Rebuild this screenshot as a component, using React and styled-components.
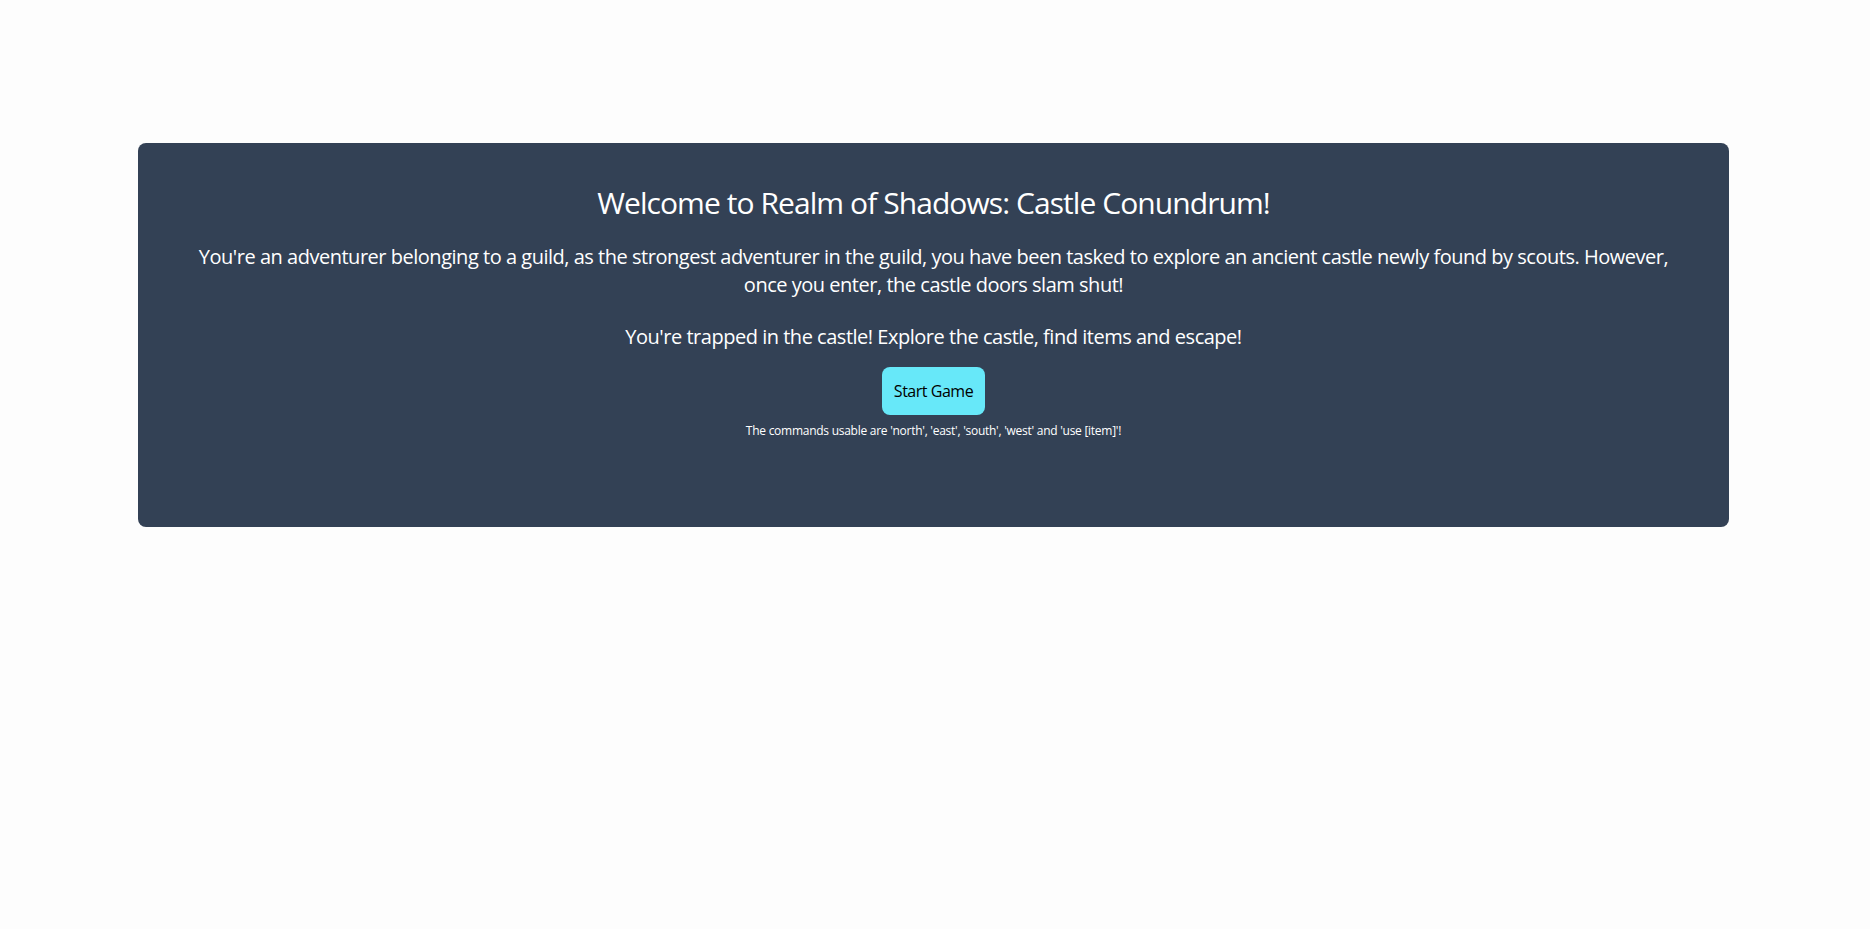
import styled, { createGlobalStyle } from 'styled-components';

const GlobalStyle = createGlobalStyle`
  html, body {
    margin: 0;
    padding: 0;
    background: #fdfdfd;
  }
  body {
    font-family: "Open Sans", "Noto Sans", "Liberation Sans", sans-serif;
    letter-spacing: -0.03em;
  }
  * {
    box-sizing: border-box;
  }
`;

const Page = styled.main`
  padding: 143px 141px 0 138px;
`;

const Card = styled.section`
  background: #334155;
  border-radius: 8px;
  color: #ffffff;
  text-align: center;
  padding: 42px 48px 88px;
  display: flex;
  flex-direction: column;
  align-items: center;
`;

const Title = styled.h1`
  margin: 0 0 22px;
  font-size: 30px;
  line-height: 36px;
  font-weight: 400;
  letter-spacing: -0.031em;
`;

const Text = styled.p`
  margin: 0 0 ${({ $gap }) => $gap || 24}px;
  font-size: 20px;
  line-height: 28px;
`;

const StartButton = styled.button`
  font-family: inherit;
  letter-spacing: inherit;
  font-size: 16px;
  line-height: 24px;
  padding: 12px;
  margin-bottom: 8px;
  border: none;
  border-radius: 8px;
  background: #67e8f9;
  color: #000;
  cursor: pointer;

  &:hover {
    background: #22d3ee;
  }
`;

const Hint = styled.small`
  font-size: 12px;
  line-height: 16px;
  letter-spacing: -0.022em;
`;

export default function App() {
  return (
    <>
      <GlobalStyle />
      <Page>
        <Card>
          <Title>Welcome to Realm of Shadows: Castle Conundrum!</Title>
          <Text>
            You're an adventurer belonging to a guild, as the strongest adventurer in the guild, you have been tasked to explore an ancient castle newly found by scouts. However, once you enter, the castle doors slam shut!
          </Text>
          <Text $gap={16}>You're trapped in the castle! Explore the castle, find items and escape!</Text>
          <StartButton>Start Game</StartButton>
          <Hint>The commands usable are 'north', 'east', 'south', 'west' and 'use [item]'!</Hint>
        </Card>
      </Page>
    </>
  );
}
